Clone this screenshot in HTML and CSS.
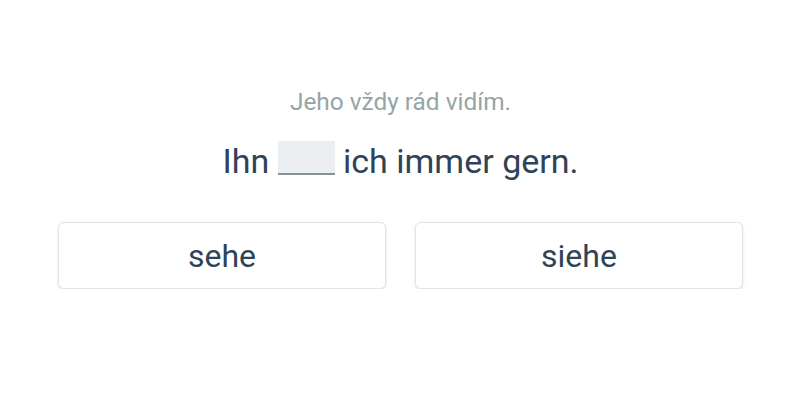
FILE: index.html
```html
<!DOCTYPE html>
<html lang="de">
<head>
  <meta charset="UTF-8" />
  <title>Lückentext</title>
  <link rel="stylesheet" href="styles.css">
</head>
<body>

<div class="exercise">
  <p class="hint">Jeho vždy rád vidím.</p>
  <p class="sentence">Ihn <span class="blank"></span> ich immer gern.</p>

  <div class="choices">
    <button class="choice">sehe</button>
    <button class="choice">siehe</button>
  </div>
</div>

</body>
</html>
```

FILE: styles.css
```css
body {
  font-family: Roboto, "Noto Sans", sans-serif;
  background: white;
  margin: 0;
  color: #2c3e50;
}
.exercise {
  padding: 88px 57px 0 58px;
}
.hint {
  text-align: center;
  color: #95a5a6;
  font-size: 24.4px;
  margin: 0;
  line-height: 28px;
}
.sentence {
  text-align: center;
  font-size: 34px;
  margin: 23px 0 0;
  line-height: 44px;
  color: #2f4358;
}
.blank {
  display: inline-block;
  width: 57px;
  height: 32px;
  background: #eceff1;
  border-bottom: 2px solid #849395;
  vertical-align: -2px;
}
.choices {
  display: flex;
  gap: 29px;
  margin-top: 39px;
}
.choice {
  flex: 1;
  height: 67px;
  background: white;
  border: 1px solid #e2e4e6;
  border-radius: 6px;
  box-shadow: 0 1px 3px rgba(0,0,0,0.12);
  font-family: inherit;
  font-size: 32px;
  color: #2f4358;
  cursor: pointer;
}
```
